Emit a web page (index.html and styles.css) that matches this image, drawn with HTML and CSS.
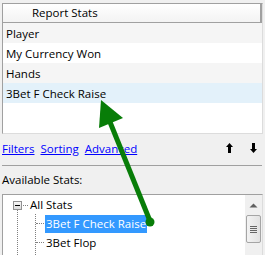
FILE: index.html
```html
<!DOCTYPE html>
<html>
<head>
<meta charset="utf-8">
<link rel="stylesheet" href="styles.css">
</head>
<body>
<div class="page">
  <div class="report">
    <div class="header"><span class="header-cell">Report Stats</span></div>
    <div class="row alt">Player</div>
    <div class="row">My Currency Won</div>
    <div class="row alt">Hands</div>
    <div class="row sel">3Bet F Check Raise</div>
  </div>
  <div class="links">
    <a href="#">Filters</a>
    <a href="#">Sorting</a>
    <a href="#">Advanced</a>
    <span class="spacer"></span>
    <svg class="arr" width="7" height="10" viewBox="0 0 7 10"><path d="M3.5 0 L7 4 L5 4 L5 10 L2 10 L2 4 L0 4 Z" fill="#000"/></svg>
    <svg class="arr down" width="7" height="10" viewBox="0 0 7 10"><path d="M3.5 10 L7 6 L5 6 L5 0 L2 0 L2 6 L0 6 Z" fill="#000"/></svg>
  </div>
  <div class="sep"></div>
  <div class="label">Available Stats:</div>
  <div class="tree">
    <div class="tree-body">
      <div class="node root">
        <span class="toggle"><span class="minus"></span></span>
        <span class="hdots"></span>
        <span class="ntext">All Stats</span>
      </div>
      <div class="node child">
        <span class="hdots short"></span>
        <span class="ntext hl">3Bet F Check Raise</span>
      </div>
      <div class="node child">
        <span class="hdots short"></span>
        <span class="ntext">3Bet Flop</span>
      </div>
      <div class="vline v1"></div>
      <div class="vline v2"></div>
    </div>
    <div class="scroll">
      <svg class="up" width="9" height="5" viewBox="0 0 9 5"><path d="M0.5 4.5 L4.5 0.5 L8.5 4.5 Z" fill="#606060"/></svg>
      <div class="thumb"><span></span><span></span><span></span><span></span></div>
    </div>
  </div>
  <svg class="arrow" width="265" height="255" viewBox="0 0 265 255">
    <line x1="150" y1="221" x2="110" y2="122" stroke="#087d08" stroke-width="5"/>
    <polygon points="101,100 123,118 99,128" fill="#087d08"/>
    <circle cx="150" cy="222" r="4.5" fill="#087d08"/>
  </svg>
</div>
</body>
</html>
```
FILE: styles.css
```css
html, body {
  margin: 0;
  padding: 0;
}
body {
  background: #f0f0f0;
  font-family: "Open Sans", "Noto Sans", sans-serif;
  font-size: 11.5px;
  color: #000;
}
.page {
  position: relative;
  width: 265px;
  height: 255px;
  overflow: hidden;
  padding-top: 3px;
  box-sizing: border-box;
}
.report {
  margin-left: 2px;
  width: 259px;
  height: 129px;
  border: 1px solid #a0a0a0;
  border-right-color: #dcdcdc;
  border-bottom-color: #dcdcdc;
  background: #fff;
}
.header {
  height: 18px;
  border-bottom: 1px solid #a0a0a0;
  background: linear-gradient(#ffffff, #f3f3f3);
  display: flex;
}
.header-cell {
  flex: 1;
  line-height: 18px;
  padding-left: 29px;
  border-right: 2px solid #a0a0a0;
}
.row {
  height: 20px;
  line-height: 21px;
  padding-left: 3px;
  background: #fff;
}
.row.alt { background: #f5f5f5; }
.row.sel { background: #e3f1fa; }
.links {
  display: flex;
  align-items: center;
  height: 16px;
  margin-top: 6px;
  padding-left: 2px;
  gap: 6px;
}
.links a {
  color: #0000ff;
  text-decoration: underline;
}
.spacer { flex: 1; }
.arr { display: block; }
.arr.down { margin-left: 11px; margin-right: 8px; }
.sep {
  margin: 9px 3px 0 2px;
  height: 1px;
  background: #a0a0a0;
}
.label {
  margin-top: 6px;
  padding-left: 2px;
  height: 17px;
  line-height: 15px;
}
.tree {
  margin-top: 5px;
  margin-left: 2px;
  width: 259px;
  height: 80px;
  border: 1px solid #a0a0a0;
  border-right-color: #dcdcdc;
  background: #fff;
  display: flex;
}
.tree-body {
  flex: 1;
  position: relative;
  padding-top: 1px;
}
.node {
  height: 19px;
  display: flex;
  align-items: center;
}
.root { padding-left: 10px; height: 18px; }
.child { padding-left: 33px; }
.toggle {
  width: 7px;
  height: 7px;
  border: 1px solid #919191;
  background: linear-gradient(#f7f7f7, #dcdcdc);
  position: relative;
}
.minus {
  position: absolute;
  left: 1px;
  top: 3px;
  width: 5px;
  height: 1px;
  background: #000;
}
.hdots {
  width: 5px;
  border-top: 1px dotted #808080;
  margin: 0 1px 0 1px;
}
.hdots.short { width: 8px; margin: 0 1px 0 0; }
.ntext {
  line-height: 18px;
  padding: 0 1px;
}
.ntext.hl {
  background: #3399ff;
  color: #fff;
}
.vline {
  position: absolute;
  border-left: 1px dotted #808080;
}
.v1 { left: 14px; top: 15px; bottom: 0; }
.v2 { left: 32px; top: 19px; bottom: 0; }
.scroll {
  width: 17px;
  background: #f0f0f0;
  display: flex;
  flex-direction: column;
  align-items: center;
}
.up { margin-top: 8px; }
.thumb {
  margin-top: 7px;
  width: 13px;
  height: 26px;
  border: 1px solid #a5a5a5;
  border-radius: 2px;
  background: linear-gradient(90deg, #f3f3f3, #e2e2e2);
  display: flex;
  flex-direction: column;
  justify-content: center;
  align-items: center;
  gap: 1px;
}
.thumb span {
  width: 7px;
  height: 1px;
  background: #666;
}
.arrow {
  position: absolute;
  left: 0;
  top: 0;
}
```
